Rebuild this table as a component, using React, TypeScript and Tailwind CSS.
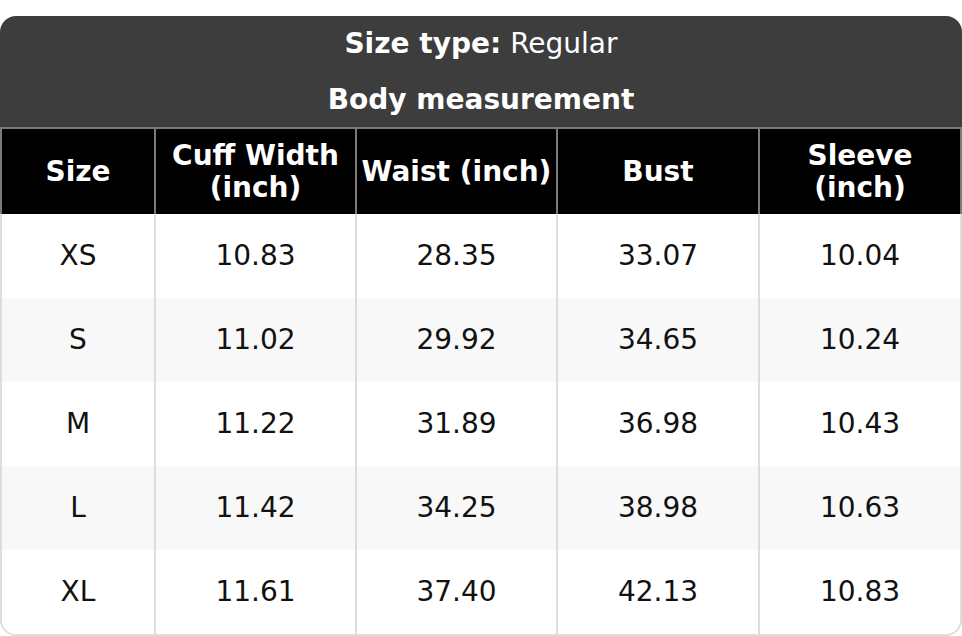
import React from "react";

const rows = [
  ["XS", "10.83", "28.35", "33.07", "10.04"],
  ["S", "11.02", "29.92", "34.65", "10.24"],
  ["M", "11.22", "31.89", "36.98", "10.43"],
  ["L", "11.42", "34.25", "38.98", "10.63"],
  ["XL", "11.61", "37.40", "42.13", "10.83"],
];

const widths = ["w-[152px]", "w-[201px]", "w-[201px]", "w-[202px]", "w-[202px]"];

export default function App() {
  return (
    <div
      className="w-[962px] h-[636px] bg-white pt-[16px]"
      style={{ fontFamily: '"DejaVu Sans", Verdana, sans-serif' }}
    >
      <div className="flex flex-col">
        <div className="bg-[#3d3d3d] rounded-t-[16px] text-white text-[28px]">
          <div className="h-[56px] flex items-center justify-center">
            <span className="font-bold">Size type:</span>
            <span className="ml-[9px]">Regular</span>
          </div>
          <div className="h-[55px] flex items-center justify-center font-bold">
            Body measurement
          </div>
        </div>
        <div className="flex h-[87px] bg-black border-t-2 border-x-2 border-[#7a7a7a] text-white font-bold text-[28px] leading-[32px]">
          {[
            ["Size"],
            ["Cuff Width", "(inch)"],
            ["Waist (inch)"],
            ["Bust"],
            ["Sleeve", "(inch)"],
          ].map((lines, i) => (
            <div
              key={i}
              className={`${widths[i]} shrink-0 flex flex-col items-center justify-center text-center whitespace-nowrap ${
                i > 0 ? "border-l-2 border-[#7a7a7a]" : ""
              }`}
            >
              {lines.map((l, j) => (
                <span key={j}>{l}</span>
              ))}
            </div>
          ))}
        </div>
        <div className="border-x-2 border-b-2 border-[#dddddd] rounded-b-[16px] overflow-hidden">
          {rows.map((r, ri) => (
            <div
              key={ri}
              className={`flex h-[84px] text-[28px] text-[#111111] ${
                ri % 2 === 1 ? "bg-[#f8f8f8]" : "bg-white"
              }`}
            >
              {r.map((c, ci) => (
                <div
                  key={ci}
                  className={`${widths[ci]} shrink-0 flex items-center justify-center ${
                    ci > 0 ? "border-l-2 border-[#dddddd]" : ""
                  }`}
                >
                  {c}
                </div>
              ))}
            </div>
          ))}
        </div>
      </div>
    </div>
  );
}
